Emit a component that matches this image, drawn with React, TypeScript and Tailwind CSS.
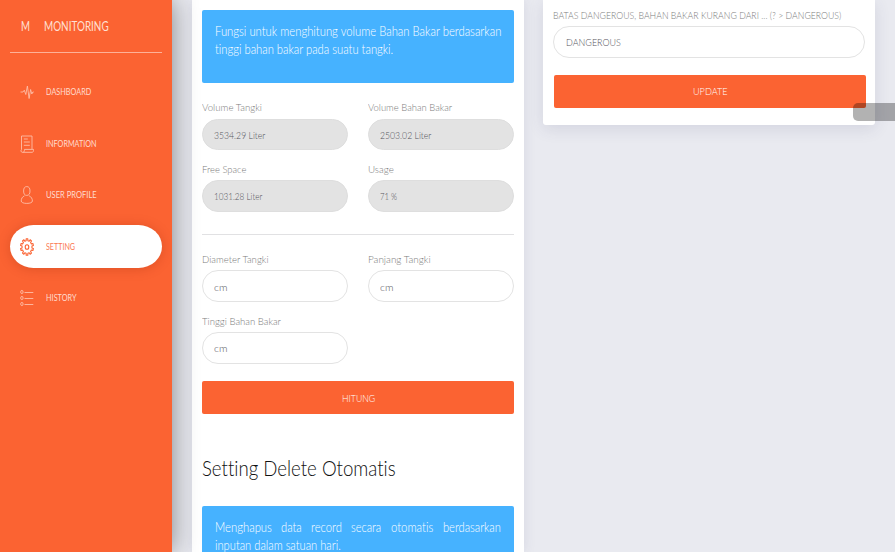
import { useLayoutEffect, useRef, useState } from "react";
import type { ReactNode } from "react";

/** Condenses a run of text horizontally so that it takes up exactly `width` pixels. */
function Fit({ width, children }: { width: number; children: string }) {
  const ref = useRef<HTMLSpanElement>(null);
  const [scale, setScale] = useState(1);
  useLayoutEffect(() => {
    if (ref.current) setScale(width / ref.current.offsetWidth);
  }, [width]);
  return (
    <span className="inline-block align-top" style={{ width }}>
      <span ref={ref} className="inline-block origin-left align-top" style={{ transform: `scaleX(${scale})` }}>
        {children}
      </span>
    </span>
  );
}

type NavItem = { label: string; width: number; icon: ReactNode; active?: boolean };

const PulseIcon = () => <path d="M.5 9H3l1.3-1.800 1.500 4.300L7.400 3l1.700 12.500 1.500-9 1.200 4.500 1-2h1" />;

const PaperIcon = () => (
  <>
    <path d="M1.500 14.500V1h10.500v13M1.500 14.500c-.8.5-.8 2.800.8 2.800h9.900c1 0 1.300-.9 1.300-2.900H4.500c0 1.800-.5 2.900-1.800 2.900" />
    <path d="M3.800 4h4M3.800 7h6M3.800 10.300h6" />
  </>
);

const UserIcon = () => (
  <>
    <ellipse cx="6.800" cy="5" rx="3.200" ry="4.400" />
    <path d="M4.500 9.800C2.300 10.800 1.200 12.700 1.200 15c0 1.500 2.300 2.400 5.600 2.400s5.600-.9 5.600-2.400c0-2.300-1.100-4.200-3.300-5.200" />
  </>
);

const gearPoints = Array.from({ length: 40 }, (_, i) => {
  const outer = i % 4 < 2;
  const angle = (Math.floor(i / 4) + [-0.2, 0.2, 0.28, 0.72][i % 4]) * (Math.PI / 5);
  const x = 7 + Math.sin(angle) * (outer ? 6.5 : 5);
  const y = 9 - Math.cos(angle) * (outer ? 8.3 : 6.4);
  return `${x.toFixed(2)},${y.toFixed(2)}`;
}).join(" ");

const GearIcon = () => (
  <>
    <polygon points={gearPoints} />
    <ellipse cx="7" cy="9" rx="1.800" ry="2.300" />
  </>
);

const ListIcon = () => (
  <>
    <ellipse cx="1.900" cy="3" rx="1.200" ry="1.600" />
    <ellipse cx="1.900" cy="9" rx="1.200" ry="1.600" />
    <ellipse cx="1.900" cy="15" rx="1.200" ry="1.600" />
    <path d="M4.500 3.500h8.800M4.500 9.500h8.800M4.500 15.500h8.800" />
  </>
);

const nav: NavItem[] = [
  { label: "DASHBOARD", width: 45.5, icon: <PulseIcon /> },
  { label: "INFORMATION", width: 50.5, icon: <PaperIcon /> },
  { label: "USER PROFILE", width: 50.5, icon: <UserIcon /> },
  { label: "SETTING", width: 29, icon: <GearIcon />, active: true },
  { label: "HISTORY", width: 30.5, icon: <ListIcon /> },
];

function Sidebar() {
  return (
    <aside className="z-10 h-[552px] w-[172px] shrink-0 bg-[#fb6332] px-[10px] text-white shadow-[0_0_24px_rgba(0,0,0,0.45)]">
      <div className="flex h-[53px] items-center border-b border-[#fdb198] pl-[10.500px] pt-[2px] text-[12.900px] text-[#ffe0d4]">
        <span className="w-[23.500px]">
          <Fit width={9}>M</Fit>
        </span>
        <Fit width={64.5}>MONITORING</Fit>
      </div>
      <nav className="mt-[17.500px] flex flex-col gap-[8.500px]">
        {nav.map((item) => (
          <a
            key={item.label}
            className={
              item.active
                ? "flex h-[43px] items-center rounded-[24px/22px] bg-white pl-[10px] text-[#fb6332] shadow-[0_1px_12px_rgba(140,30,0,0.25)]"
                : "flex h-[43px] items-center pl-[10px] text-[#ffdccf]"
            }
          >
            <svg
              viewBox="0 0 14 18"
              className={item.active ? "h-[18px] w-[14px]" : "h-[18px] w-[14px] opacity-75"}
              fill="none"
              stroke="currentColor"
              strokeWidth={item.active ? 1.1 : 0.9}
              strokeLinejoin="round"
            >
              {item.icon}
            </svg>
            <span className={item.active ? "ml-[11.500px] pt-px text-[9.600px] opacity-85" : "ml-[11.500px] pt-px text-[9.600px]"}>
              <Fit width={item.width}>{item.label}</Fit>
            </span>
          </a>
        ))}
      </nav>
    </aside>
  );
}

type FieldProps = { label: string; labelWidth: number; value: string; valueWidth: number; filled?: boolean };

function Field({ label, labelWidth, value, valueWidth, filled }: FieldProps) {
  return (
    <label className="block h-[61.700px]">
      <span className="block h-[17.500px] text-[10.200px] leading-[13px] text-[#7c7c7c]">
        <Fit width={labelWidth}>{label}</Fit>
      </span>
      <span
        className={
          filled
            ? "flex h-[31.500px] items-center rounded-[16px] border border-[#dedede] bg-[#e3e3e3] pl-[11.500px] pt-[2px] text-[10.200px] text-[#55555c]"
            : "flex h-[31.500px] items-center rounded-[16px] border border-[#e3e3e3] bg-white pl-[11.500px] pt-[2px] text-[10.200px] text-[#55555c]"
        }
      >
        <Fit width={valueWidth}>{value}</Fit>
      </span>
    </label>
  );
}

export default function App() {
  return (
    <div className="relative flex h-[552px] w-[895px] overflow-hidden bg-[#e9eaf0] font-[Lato,'Open_Sans',sans-serif] font-normal whitespace-nowrap [font-variant-ligatures:none]">
      <Sidebar />
      <main className="ml-[19.700px] h-[552px] w-[332px] shrink-0 bg-white px-[10px] pt-[10px] shadow-[0_0_12px_rgba(60,60,110,0.1)]">
        <div className="h-[73px] rounded-[2px] bg-[#46b2ff] px-[13px] pt-[12px] text-[13.800px] font-light leading-[18px] text-white">
          <p>
            <Fit width={286}>Fungsi untuk menghitung volume Bahan Bakar berdasarkan</Fit>
          </p>
          <p>
            <Fit width={178}>tinggi bahan bakar pada suatu tangki.</Fit>
          </p>
        </div>
        <div className="mt-[18px] grid grid-cols-2 gap-x-[20px] font-light">
          <Field label="Volume Tangki" labelWidth={60} value="3534.29 Liter" valueWidth={51} filled />
          <Field label="Volume Bahan Bakar" labelWidth={84.5} value="2503.02 Liter" valueWidth={51} filled />
          <Field label="Free Space" labelWidth={44.5} value="1031.28 Liter" valueWidth={48} filled />
          <Field label="Usage" labelWidth={26} value="71 %" valueWidth={17.5} filled />
        </div>
        <div className="mt-[9.600px] h-px bg-[#e1e1e3]" />
        <div className="mt-[18px] grid grid-cols-2 gap-x-[20px] font-light">
          <Field label="Diameter Tangki" labelWidth={67} value="cm" valueWidth={13.5} />
          <Field label="Panjang Tangki" labelWidth={62.5} value="cm" valueWidth={13.5} />
          <Field label="Tinggi Bahan Bakar" labelWidth={79} value="cm" valueWidth={13.5} />
        </div>
        <button className="ml-[0.500px] mt-[4.500px] flex h-[33px] w-full items-center justify-center rounded-[2px] bg-[#fb6332] pt-[2px] text-[10.300px] font-light text-white">
          <Fit width={33}>HITUNG</Fit>
        </button>
        <h2 className="mt-[40px] h-[30px] text-[21.500px] font-light leading-[28px] text-[#111]">
          <Fit width={194}>Setting Delete Otomatis</Fit>
        </h2>
        <div className="mt-[22px] h-[73px] rounded-[2px] bg-[#46b2ff] px-[13px] pt-[12px] text-[13.800px] font-light leading-[18px] text-white">
          <p className="flex justify-between">
            <Fit width={56.5}>Menghapus</Fit>
            <Fit width={21}>data</Fit>
            <Fit width={31}>record</Fit>
            <Fit width={30.5}>secara</Fit>
            <Fit width={42}>otomatis</Fit>
            <Fit width={58}>berdasarkan</Fit>
          </p>
          <p>
            <Fit width={126}>inputan dalam satuan hari.</Fit>
          </p>
        </div>
      </main>
      <section className="ml-[19.700px] h-[125px] w-[332px] shrink-0 rounded-b-[3px] bg-white px-[10px] pt-[8.500px] font-light shadow-[0_4px_16px_rgba(60,60,110,0.12)]">
        <Field
          label="BATAS DANGEROUS, BAHAN BAKAR KURANG DARI ... (? > DANGEROUS)"
          labelWidth={288.5}
          value="DANGEROUS"
          valueWidth={54.5}
        />
        <button className="ml-[0.500px] mt-[4.500px] flex h-[33px] w-full items-center justify-center rounded-[2px] bg-[#fb6332] pt-[2px] text-[10.300px] text-white">
          <Fit width={34.5}>UPDATE</Fit>
        </button>
      </section>
      <div className="absolute right-0 top-[103px] h-[18px] w-[42px] rounded-l-[5px] bg-black/30" />
    </div>
  );
}
